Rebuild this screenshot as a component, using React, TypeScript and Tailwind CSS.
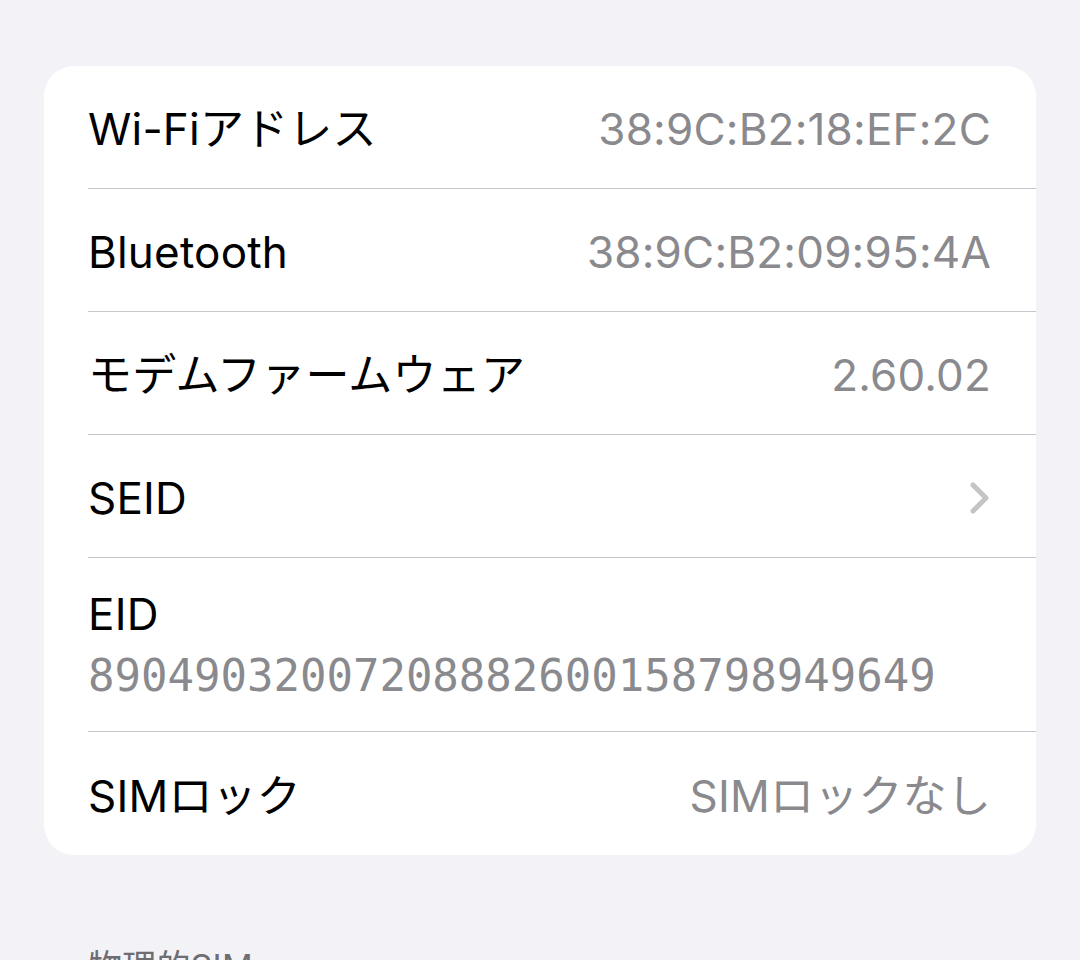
import React from "react";

interface RowProps {
  label: string;
  value?: string;
  chevron?: boolean;
  last?: boolean;
}

function Chevron() {
  return (
    <svg width="22" height="34" viewBox="0 0 22 34" className="shrink-0">
      <polyline
        points="4,4 17,17 4,30"
        fill="none"
        stroke="#c4c4c7"
        strokeWidth="5"
        strokeLinecap="round"
        strokeLinejoin="round"
      />
    </svg>
  );
}

function Row({ label, value, chevron, last }: RowProps) {
  return (
    <div className="pl-[44px]">
      <div
        className={`flex h-[123px] items-center justify-between pr-[45px] pt-[4px] ${
          last ? "" : "border-b border-[#c6c6c8]"
        }`}
      >
        <span className="text-[44px] text-black">{label}</span>
        {value && <span className="text-[44px] text-[#8a8a8e]">{value}</span>}
        {chevron && <Chevron />}
      </div>
    </div>
  );
}

export default function App() {
  return (
    <div className="h-[960px] w-full overflow-hidden bg-[#f2f2f7] px-[44px] pt-[66px] font-['Inter','Noto_Sans_CJK_JP',sans-serif] tracking-[0.2px]">
      <div className="overflow-hidden rounded-[30px] bg-white">
        <Row label="Wi-Fiアドレス" value="38:9C:B2:18:EF:2C" />
        <Row label="Bluetooth" value="38:9C:B2:09:95:4A" />
        <Row label="モデムファームウェア" value="2.60.02" />
        <Row label="SEID" chevron />
        <div className="pl-[44px]">
          <div className="flex h-[174px] flex-col justify-center border-b border-[#c6c6c8] pr-[45px] leading-[62px]">
            <span className="text-[44px] text-black">EID</span>
            <span className="font-['DejaVu_Sans_Mono',monospace] text-[44px] tracking-normal text-[#8a8a8e]">
              89049032007208882600158798949649
            </span>
          </div>
        </div>
        <Row label="SIMロック" value="SIMロックなし" last />
      </div>
      <div className="mt-[86px] pl-[44px] text-[34px] text-[#6d6d72]">物理的SIM</div>
    </div>
  );
}
